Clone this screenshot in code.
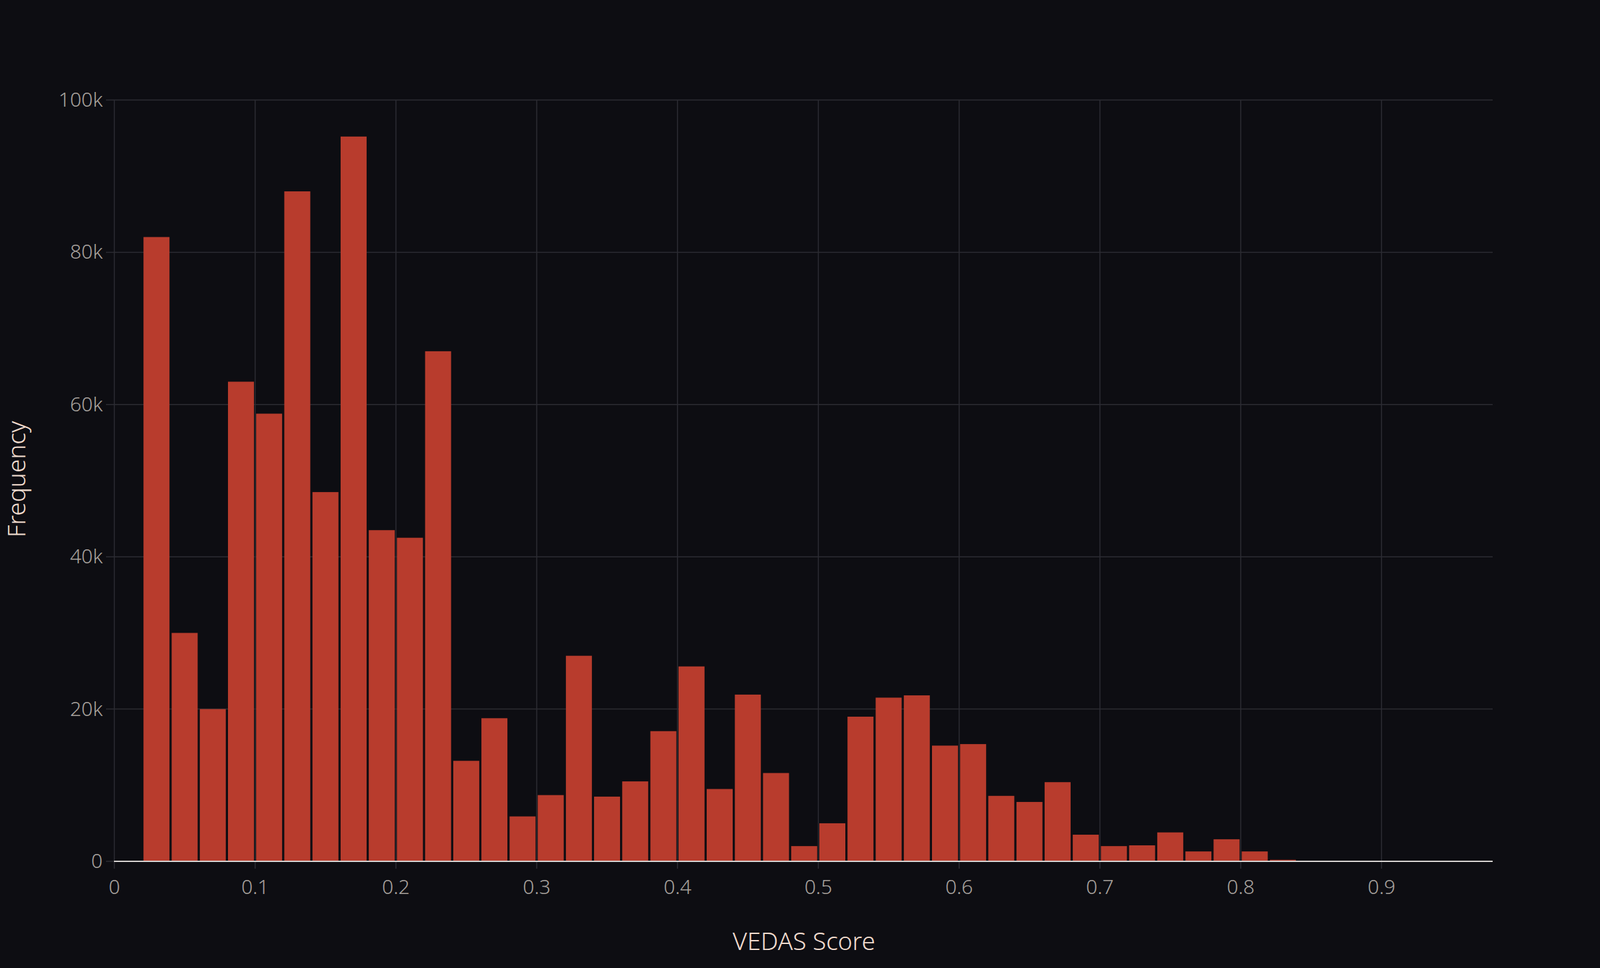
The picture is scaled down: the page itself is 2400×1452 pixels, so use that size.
const data = [82,30,20,63,58.8,88,48.5,95.2,43.5,42.5,67,13.2,18.8,5.9,8.7,27,8.5,10.5,17.1,25.6,9.5,21.9,11.6,2,5,19,21.5,21.8,15.2,15.4,8.6,7.8,10.4,3.5,2,2.1,3.8,1.3,2.9,1.3,0.2];
const X = (v: number) => 171.5 + v * 2112;
const Y = (k: number) => 1292 - k * 11.42;

export default function App() {
  return (
    <div className="w-[2400px] h-[1452px] bg-[#0d0d12] font-['Inter','Liberation_Sans',sans-serif]">
      <svg width="2400" height="1452" viewBox="0 0 2400 1452">
        {[0, 20, 40, 60, 80, 100].map((k) => (
          <g key={k}>
            <line x1={159} x2={2239} y1={Y(k)} y2={Y(k)} stroke="#2c2c33" strokeWidth={1.5} />
            <text x={154} y={Y(k) + 10} textAnchor="end" fontSize={30} fontWeight={300} fill="#a8a29e">{k === 0 ? "0" : `${k}k`}</text>
          </g>
        ))}
        {[0,1,2,3,4,5,6,7,8,9].map((i) => (
          <g key={i}>
            <line x1={X(i / 10)} x2={X(i / 10)} y1={150} y2={1303} stroke="#2c2c33" strokeWidth={1.5} />
            <text x={X(i / 10)} y={1341} textAnchor="middle" fontSize={30} fontWeight={300} fill="#a8a29e">{i === 0 ? "0" : `0.${i}`}</text>
          </g>
        ))}
        {data.map((k, i) => {
          const x0 = X(0.02 + i * 0.02);
          return <rect key={i} x={x0 + 1.5} y={Y(k)} width={39} height={Math.max(0, 1292 - Y(k))} fill="#b83c2d" />;
        })}
        <line x1={171} x2={2239} y1={1292} y2={1292} stroke="#d6d3d1" strokeWidth={2} />
        <text x={1206} y={1425} textAnchor="middle" fontSize={37} fontWeight={300} fill="#f2ddd0">VEDAS Score</text>
        <text x={0} y={0} transform="translate(38 719) rotate(-90)" textAnchor="middle" fontSize={37} fontWeight={300} fill="#f2ddd0">Frequency</text>
      </svg>
    </div>
  );
}
